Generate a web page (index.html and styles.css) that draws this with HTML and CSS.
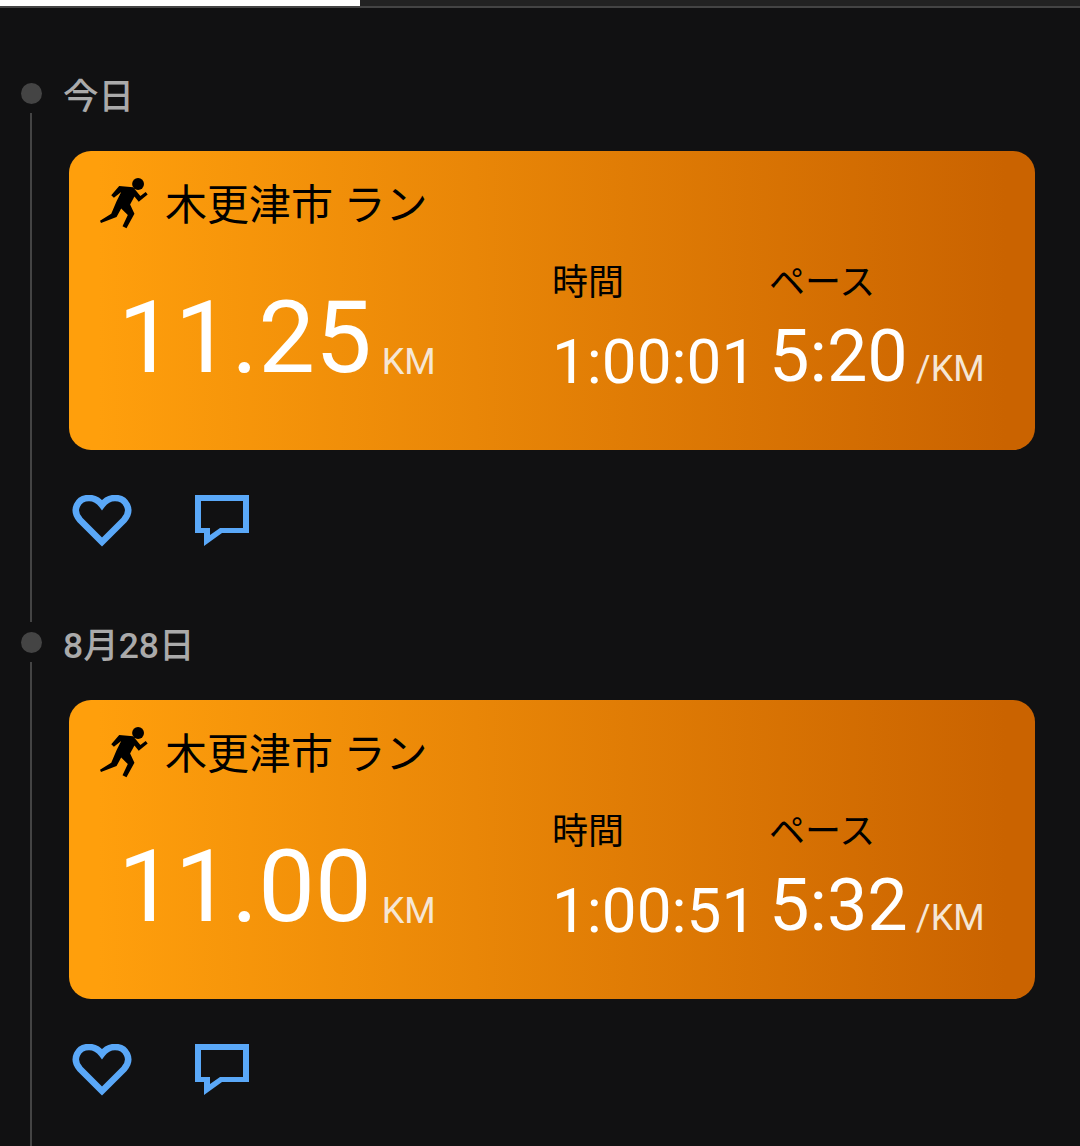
FILE: index.html
```html
<!DOCTYPE html>
<html lang="ja">
<head>
    <meta charset="utf-8">
    <title>アクティビティ</title>
    <link rel="stylesheet" href="styles.css">
</head>
<body>
    <div class="tabs">
        <div class="tab-on"></div>
        <div class="tab-off"></div>
    </div>
    <div class="feed">
        <div class="day-head">
            <span class="dot"></span>
            <span class="day-label">今日</span>
        </div>
        <div class="day-body">
            <div class="card">
                <div class="card-title">
                    <svg class="run-icon" viewBox="30 20 145 155"><circle cx="145" cy="40" r="18"/><path d="M64 74 L88 46 L130 50 L152 76 L168 64 L174 72 L147 94 L134 78 L121 102 L134 130 L110 174 L98 168 L114 134 L94 114 L80 140 L33 158 L30 151 L64 130 L80 92 L94 64 L72 82 Z"/></svg>
                    <span class="place">木更津市 ラン</span>
                </div>
                <div class="stats">
                    <div class="distance"><span class="big">11.25</span><span class="unit">KM</span></div>
                    <div class="stat stat-time">
                        <div class="stat-label">時間</div>
                        <div class="stat-value">1:00:01</div>
                    </div>
                    <div class="stat stat-pace">
                        <div class="stat-label">ペース</div>
                        <div class="stat-value pace">5:20<span class="unit small">/KM</span></div>
                    </div>
                </div>
            </div>
            <div class="actions">
                <svg class="heart" viewBox="0 0 60 52"><path d="M30 47 L8 25 C-1 15 6 3 17 3 C23 3 27 6 30 10 C33 6 37 3 43 3 C54 3 61 15 52 25 Z"/></svg>
                <svg class="bubble" viewBox="0 0 54 52"><path fill-rule="evenodd" d="M0 0 H54 V38 H27 L9 51 V38 H0 Z M6 6 V33 H15 V40 L25 33 H48 V6 Z"/></svg>
            </div>
        </div>
        <div class="day-head">
            <span class="dot"></span>
            <span class="day-label">8月28日</span>
        </div>
        <div class="day-body">
            <div class="card">
                <div class="card-title">
                    <svg class="run-icon" viewBox="30 20 145 155"><circle cx="145" cy="40" r="18"/><path d="M64 74 L88 46 L130 50 L152 76 L168 64 L174 72 L147 94 L134 78 L121 102 L134 130 L110 174 L98 168 L114 134 L94 114 L80 140 L33 158 L30 151 L64 130 L80 92 L94 64 L72 82 Z"/></svg>
                    <span class="place">木更津市 ラン</span>
                </div>
                <div class="stats">
                    <div class="distance"><span class="big">11.00</span><span class="unit">KM</span></div>
                    <div class="stat stat-time">
                        <div class="stat-label">時間</div>
                        <div class="stat-value">1:00:51</div>
                    </div>
                    <div class="stat stat-pace">
                        <div class="stat-label">ペース</div>
                        <div class="stat-value pace">5:32<span class="unit small">/KM</span></div>
                    </div>
                </div>
            </div>
            <div class="actions">
                <svg class="heart" viewBox="0 0 60 52"><path d="M30 47 L8 25 C-1 15 6 3 17 3 C23 3 27 6 30 10 C33 6 37 3 43 3 C54 3 61 15 52 25 Z"/></svg>
                <svg class="bubble" viewBox="0 0 54 52"><path fill-rule="evenodd" d="M0 0 H54 V38 H27 L9 51 V38 H0 Z M6 6 V33 H15 V40 L25 33 H48 V6 Z"/></svg>
            </div>
        </div>
    </div>
</body>
</html>
```
FILE: styles.css
```css
html, body {
    margin: 0;
    padding: 0;
}
body {
    width: 1080px;
    height: 1146px;
    overflow: hidden;
    background-color: #111112;
    font-family: Roboto, "Noto Sans CJK JP", sans-serif;
}
.tabs {
    display: flex;
    height: 6px;
    border-bottom: 2px solid #444;
}
.tab-on {
    width: 360px;
    background-color: #fff;
}
.tab-off {
    flex: 1;
    background-color: #222;
}
.feed {
    padding-top: 65px;
}
.day-head {
    display: flex;
    align-items: center;
    height: 40px;
    padding-left: 21px;
}
.dot {
    width: 21px;
    height: 21px;
    border-radius: 50%;
    background-color: #444;
}
.day-label {
    margin: 7px 0 0 21px;
    font-size: 35.5px;
    font-weight: 500;
    line-height: 40px;
    color: #aaa;
}
.day-body {
    height: 509px;
    margin-left: 30px;
    padding: 38px 45px 0 37px;
    border-left: 2px solid #444;
    box-sizing: border-box;
}
.card {
    height: 299px;
    border-radius: 22px;
    background: linear-gradient(90deg, #ff9f0c 3%, #ca6300 97%);
    color: #000;
}
.card-title {
    display: flex;
    align-items: center;
    height: 106px;
    padding-left: 31px;
    box-sizing: border-box;
}
.run-icon {
    width: 48px;
    height: 52px;
    margin-top: -2px;
    fill: #000;
}
.place {
    margin: 4px 0 0 17px;
    font-size: 42px;
    line-height: 50px;
}
.stats {
    display: flex;
}
.distance {
    width: 483px;
    padding: 26px 0 0 49px;
    box-sizing: border-box;
    color: #fff;
}
.big {
    font-size: 101px;
    line-height: 110px;
}
.unit {
    margin-left: 10px;
    font-size: 36px;
    color: #f6e6d4;
    vertical-align: -2px;
}
.stat {
    padding-top: 3px;
}
.stat-time {
    width: 217px;
}
.stat-label {
    font-size: 36px;
    line-height: 46px;
}
.stat-value {
    margin-top: 21px;
    font-size: 62px;
    line-height: 70px;
    color: #fff;
}
.pace {
    margin-top: 16px;
    font-size: 72px;
}
.unit.small {
    margin-left: 8px;
    font-size: 36px;
    vertical-align: baseline;
}
.actions {
    display: flex;
    align-items: center;
    height: 142px;
    padding-left: 3px;
}
.heart {
    width: 60px;
    height: 52px;
    fill: none;
    stroke: #5aa8f8;
    stroke-width: 6.5;
}
.bubble {
    width: 54px;
    height: 52px;
    margin-left: 63px;
    fill: #5aa8f8;
}
```
